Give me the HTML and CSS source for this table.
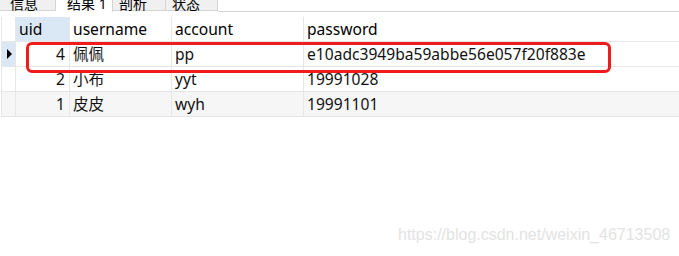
FILE: index.html
```html
<!DOCTYPE html>
<html lang="zh-CN">
<head>
    <meta charset="UTF-8">
    <title>结果 1</title>
    <link rel="stylesheet" href="styles.css">
</head>
<body>
    <div class="tabs">
        <div class="tab">信息</div>
        <div class="tab active">结果 1</div>
        <div class="tab">剖析</div>
        <div class="tab">状态</div>
        <div class="tab-fill"></div>
    </div>

    <table class="grid">
        <thead>
            <tr>
                <th class="ind"></th>
                <th class="c-uid current">uid</th>
                <th class="c-user">username</th>
                <th class="c-acc">account</th>
                <th class="c-pwd">password</th>
            </tr>
        </thead>
        <tbody>
            <tr>
                <td class="ind current"><span class="arrow"></span></td>
                <td class="num">4</td>
                <td>佩佩</td>
                <td>pp</td>
                <td>e10adc3949ba59abbe56e057f20f883e</td>
            </tr>
            <tr>
                <td class="ind"></td>
                <td class="num">2</td>
                <td>小布</td>
                <td>yyt</td>
                <td>19991028</td>
            </tr>
            <tr class="alt">
                <td class="ind"></td>
                <td class="num">1</td>
                <td>皮皮</td>
                <td>wyh</td>
                <td>19991101</td>
            </tr>
        </tbody>
    </table>

    <!-- red mark around the first row -->
    <div class="mark"></div>

    <div class="watermark">https://blog.csdn.net/weixin_46713508</div>
</body>
</html>
```

FILE: styles.css
```css
* {
    box-sizing: border-box;
    margin: 0;
    padding: 0;
}

body {
    font-family: "Noto Sans", "Noto Sans CJK SC", sans-serif;
    font-size: 15.6px;
    color: #111;
    background-color: white;
    width: 679px;
    height: 256px;
    overflow: hidden;
    position: relative;
}

.tabs {
    display: flex;
    height: 12px;
    overflow: hidden;
}

.tab {
    height: 11px;
    background-color: #f0f0f0;
    border: 1px solid #d4d4d4;
    border-top: none;
    border-left: none;
    font-size: 14px;
    line-height: 8px;
    padding-left: 10px;
    color: #000;
}

.tab:nth-child(1) { width: 56px; }
.tab:nth-child(2) { width: 57px; padding-left: 11px; }
.tab:nth-child(3) { width: 53px; padding-left: 6px; }
.tab:nth-child(4) { width: 52px; padding-left: 6px; }

.tab.active {
    background-color: white;
    border-bottom: none;
    height: 12px;
}

.tab-fill {
    flex: 1;
    border-bottom: 1px solid #d4d4d4;
    height: 12px;
}

.grid {
    margin-top: 5px;
    margin-left: 1px;
    border-collapse: collapse;
    width: 678px;
    table-layout: fixed;
}

.grid th,
.grid td {
    text-align: left;
    font-weight: normal;
    padding: 0 3px;
    white-space: nowrap;
    overflow: hidden;
    border-left: 1px solid #e6e6e6;
    border-bottom: 1px solid #e6e6e6;
}

.grid th {
    height: 24px;
    color: #000;
}

.grid td {
    height: 25px;
}

.grid th.ind,
.grid td.ind {
    width: 14px;
    padding: 0;
}

.grid .c-uid { width: 54px; }
.grid .c-user { width: 102px; }
.grid .c-acc { width: 132px; }

.grid .current {
    background-color: #dae8f6;
}

.grid td.num {
    text-align: right;
    padding-right: 4px;
}

.grid tr.alt td {
    background-color: #f6f6f6;
}

.arrow {
    display: block;
    width: 0;
    height: 0;
    margin-left: 5px;
    border-top: 5px solid transparent;
    border-bottom: 5px solid transparent;
    border-left: 5px solid #000;
}

.mark {
    position: absolute;
    left: 26px;
    top: 42px;
    width: 585px;
    height: 31px;
    border: 3px solid #f01c1c;
    border-radius: 6px;
}

.watermark {
    position: absolute;
    left: 398px;
    top: 226px;
    font-family: "Liberation Sans", Arial, sans-serif;
    font-size: 16px;
    color: #e3e3e3;
}
```
